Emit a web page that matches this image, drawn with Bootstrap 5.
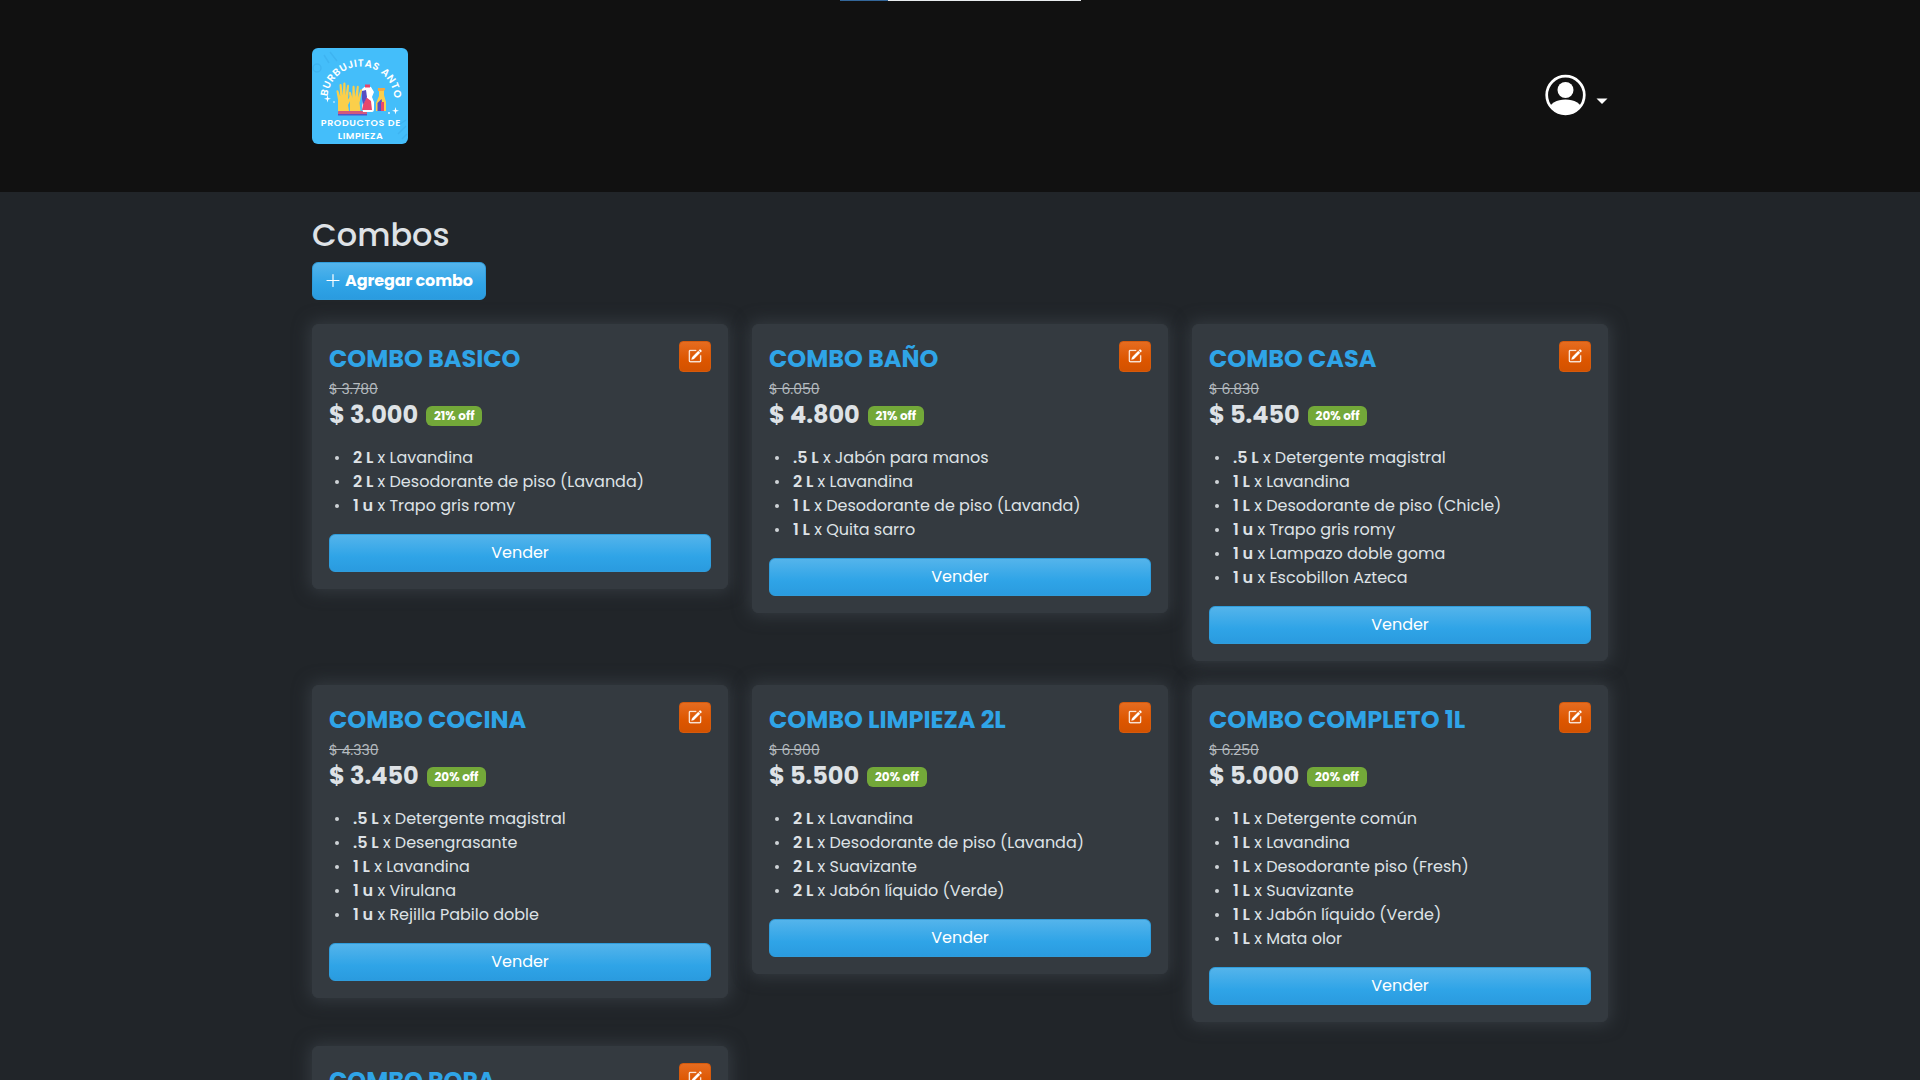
<!DOCTYPE html>
<html lang="es" data-bs-theme="dark">
<head>
<meta charset="utf-8">
<meta name="viewport" content="width=device-width, initial-scale=1">
<title>Combos</title>
<link href="https://cdn.jsdelivr.net/npm/bootstrap@5.3.0/dist/css/bootstrap.min.css" rel="stylesheet">
<style>
  body { font-family: Poppins, Inter, "Open Sans", sans-serif; background: #212529; color: #dee2e6; overflow: hidden; height: 1080px; }
  .topbar { background: #111; height: 192px; }
  .loading-track { top: 0; left: 840px; width: 241px; height: 1px; background: #e9ecef; }
  .loading-fill { width: 48px; height: 1px; background: #336699; }
  .page-title { font-size: 32px; font-weight: 500; line-height: 38px; color: #dee2e6; margin: 24px 0 8px; }
  .btn-blue { --bs-btn-color: #fff; --bs-btn-hover-color: #fff; height: 38px; line-height: 24px; border: 1px solid #2f9ddc; background: linear-gradient(#54b4eb, #2fa4e7 60%, #2a9bdf); }
  .btn-add { letter-spacing: -.1px; }
  .btn-edit { --bs-btn-color: #fff; width: 32px; height: 31px; padding: 0 0 2px; border: 1px solid #d65a0c; border-radius: 4px; background: linear-gradient(#e66c20, #dd5600 60%, #d35200); line-height: 1; }
  .btn-edit svg { display: block; margin: auto; }
  .combo { background: #343a40; border: 1px solid #343a40; box-shadow: 0 0 16px 3px #343a40; border-radius: 6px; }
  .combo-title { color: #2fa4e7; font-size: 24px; line-height: 36px; font-weight: 700; margin: 0; }
  .combo-head { height: 38px; }
  .old-price { font-size: 14px; line-height: 21px; height: 21px; color: #b5babf; }
  .price { font-size: 24px; line-height: 29px; height: 29px; font-weight: 700; }
  .off { background: #73a839; font-size: 12px; height: 20px; line-height: 12px; padding: 4px 7.8px; border-radius: 6px; margin-top: 2px; }
  .items { list-style: none; padding: 0; margin: 17px 0 16px; line-height: 24px; }
  .items li { display: flex; white-space: pre; }
  .items li::before { content: ""; width: 4px; height: 4px; border-radius: 50%; background: #ced2d6; margin: 10px 14px 0 6px; }
  .items b { font-weight: 600; }
</style>
<script src="https://cdn.jsdelivr.net/npm/bootstrap@5.3.0/dist/js/bootstrap.bundle.min.js"></script>
</head>
<body>
<svg class="d-none">
  <symbol id="pencil-square" viewBox="0 0 16 16"><path d="M15.502 1.94a.5.5 0 0 1 0 .706L14.459 3.69l-2-2L13.502.646a.5.5 0 0 1 .707 0l1.293 1.293zm-1.75 2.456-2-2L4.939 9.21a.5.5 0 0 0-.121.196l-.805 2.414a.25.25 0 0 0 .316.316l2.414-.805a.5.5 0 0 0 .196-.12l6.813-6.814z"/><path fill-rule="evenodd" d="M1 13.5A1.5 1.5 0 0 0 2.500 15h11a1.500 1.500 0 0 0 1.500-1.500v-6a.5.5 0 0 0-1 0v6a.5.5 0 0 1-.5.5h-11a.5.5 0 0 1-.5-.5v-11a.5.5 0 0 1 .5-.5H9a.5.5 0 0 0 0-1H2.500A1.500 1.500 0 0 0 1 2.500z"/></symbol>
</svg>
<div class="loading-track position-absolute"><div class="loading-fill"></div></div>
<nav class="topbar d-flex align-items-center">
  <div class="container d-flex align-items-center justify-content-between">
    <a href="#" class="d-block lh-1">
      <svg width="96" height="96" viewBox="0 0 96 96" font-family="Poppins, Inter, sans-serif" fill="#fff">
        <defs><clipPath id="round"><rect width="96" height="96" rx="6"/></clipPath><path id="arc" d="M15.300 52A33.500 33.500 0 1 1 82.300 52"/></defs>
        <g clip-path="url(#round)">
          <rect width="96" height="96" fill="#45befb"/>
          <g fill="none" stroke="#35a5e3" stroke-width="1.500" opacity=".4"><circle cx="5" cy="20" r="4"/><path d="M12 7l5 8M18 4l7 9M86 86l8-8M90 91l5-5M85 78l9-6"/></g>
          <text font-size="10.200" font-weight="600"><textPath href="#arc" startOffset="3.500" textLength="100" lengthAdjust="spacing">BURBUJITAS ANTO</textPath></text>
          <g fill="#fbcf4a">
            <path d="M26 63V52l-1.500-8.500c-.2-1.500 1.600-1.800 2-.3l1.700 5-.7-11c0-1.600 2-1.700 2.200 0l1 10 .6-11.500c.2-1.500 2.100-1.400 2.200.1l.1 11.400 1.500-9.500c.3-1.400 2-1.100 1.900.4l-1 13.400 2-3c1-1.400 2.500-.4 1.900 1L36 57l1 6z"/>
            <path d="M38 63V53l-1-8c0-1.500 1.700-1.600 2-.2l1.200 5 .3-11c.1-1.500 2-1.500 2.100 0l.5 10 1.700-10c.3-1.500 2-1.200 2 .3l-.8 10.600 2.200-7.500c.5-1.400 2-1 1.800.5L47.500 55l1 8z"/>
          </g>
          <rect x="26" y="63" width="29" height="3.500" rx="1" fill="#d2577d"/><path d="M26 66h29v1.500H26z" fill="#5553c7"/>
          <path d="M50 41q3-4 9-2l3 5-2 5 2 5v7q0 3-2 3h-9l-1-5 1-8z"/><path fill="#e7476d" d="M53 36.500h5v3h-5zM51 57l3-8 5 4 1 9H50z"/><path fill="#554fc3" d="M50 43l4-1 1 7-4 8-1-6z"/>
          <path fill="#fbcf4a" d="M67 40h5v7l2 7v9H64v-8l3-7z"/><path fill="#f2a943" d="M66 40h7v2l-2 1h-5z"/><path fill="#554fc3" d="M65.500 55l4-4 2 12h-6z"/><path fill="#e7476d" d="M69 54h3v9h-3z"/>
          <path d="M15.500 47l.8 3 2.700.8-2.700.8-.8 2.900-.8-2.900-2.700-.8 2.700-.8zM83.500 59l.8 3 2.700.8-2.700.8-.8 2.900-.8-2.900-2.700-.8 2.700-.8z"/><circle cx="22" cy="54" r=".8"/><circle cx="77" cy="65" r=".9"/>
          <text x="8.800" y="77.700" font-size="9.500" font-weight="600" textLength="79.500">PRODUCTOS DE</text>
          <text x="25.800" y="90.500" font-size="9.500" font-weight="600" textLength="45">LIMPIEZA</text>
        </g>
      </svg>
    </a>
    <a href="#" class="d-flex text-white">
      <svg width="64" height="44" viewBox="0 0 64 44">
        <defs><clipPath id="face"><circle cx="21.500" cy="21" r="19"/></clipPath></defs>
        <circle cx="21.500" cy="21" r="18.800" fill="none" stroke="#fff" stroke-width="2.700"/>
        <circle cx="21.500" cy="16" r="8" fill="#fff"/><ellipse cx="21.500" cy="35" rx="16" ry="9.500" fill="#fff" clip-path="url(#face)"/>
        <path d="M52.500 24.500h11L58 30z" fill="#fff"/>
      </svg>
    </a>
  </div>
</nav>
<main class="container">
  <h1 class="page-title">Combos</h1>
  <button class="btn btn-blue btn-add fw-bold d-flex align-items-center"><svg class="me-1" width="16" height="16" viewBox="0 0 16 16" fill="none" stroke="#fff"><path d="M2 7.500h12M8 1.500v12" stroke-width="1.200" stroke-linecap="round"/></svg>Agregar combo</button>
  <div class="row g-4 align-items-start mt-0" id="combos"></div>
</main>
<script>
  const combos = [
    ['COMBO BASICO', '3.780', '3.000', 21, ['2 L|Lavandina', '2 L|Desodorante de piso (Lavanda)', '1 u|Trapo gris romy']],
    ['COMBO BAÑO', '6.050', '4.800', 21, ['.5 L|Jabón para manos', '2 L|Lavandina', '1 L|Desodorante de piso (Lavanda)', '1 L|Quita sarro']],
    ['COMBO CASA', '6.830', '5.450', 20, ['.5 L|Detergente magistral', '1 L|Lavandina', '1 L|Desodorante de piso (Chicle)', '1 u|Trapo gris romy', '1 u|Lampazo doble goma', '1 u|Escobillon Azteca']],
    ['COMBO COCINA', '4.330', '3.450', 20, ['.5 L|Detergente magistral', '.5 L|Desengrasante', '1 L|Lavandina', '1 u|Virulana', '1 u|Rejilla Pabilo doble']],
    ['COMBO LIMPIEZA 2L', '6.900', '5.500', 20, ['2 L|Lavandina', '2 L|Desodorante de piso (Lavanda)', '2 L|Suavizante', '2 L|Jabón líquido (Verde)']],
    ['COMBO COMPLETO 1L', '6.250', '5.000', 20, ['1 L|Detergente común', '1 L|Lavandina', '1 L|Desodorante piso (Fresh)', '1 L|Suavizante', '1 L|Jabón líquido (Verde)', '1 L|Mata olor']],
    ['COMBO ROPA', '', '', 0, []]
  ];
  document.getElementById('combos').innerHTML = combos.map(([name, old, price, off, items]) => `
    <div class="col-4"><div class="combo p-3">
      <div class="combo-head d-flex justify-content-between align-items-start">
        <h4 class="combo-title">${name}</h4>
        <button class="btn btn-edit"><svg width="14" height="14" fill="#fff" stroke="#fff" stroke-width=".3"><use href="#pencil-square"/></svg></button>
      </div>
      ${price ? `<div class="old-price"><s>$ ${old}</s></div>
      <div class="d-flex align-items-center"><span class="price me-2">$ ${price}</span><span class="badge off">${off}% off</span></div>
      <ul class="items">${items.map(i => { const [q, n] = i.split('|'); return `<li><b>${q}</b> x ${n}</li>`; }).join('')}</ul>
      <button class="btn btn-blue w-100">Vender</button>` : ''}
    </div></div>`).join('');
</script>
</body>
</html>
